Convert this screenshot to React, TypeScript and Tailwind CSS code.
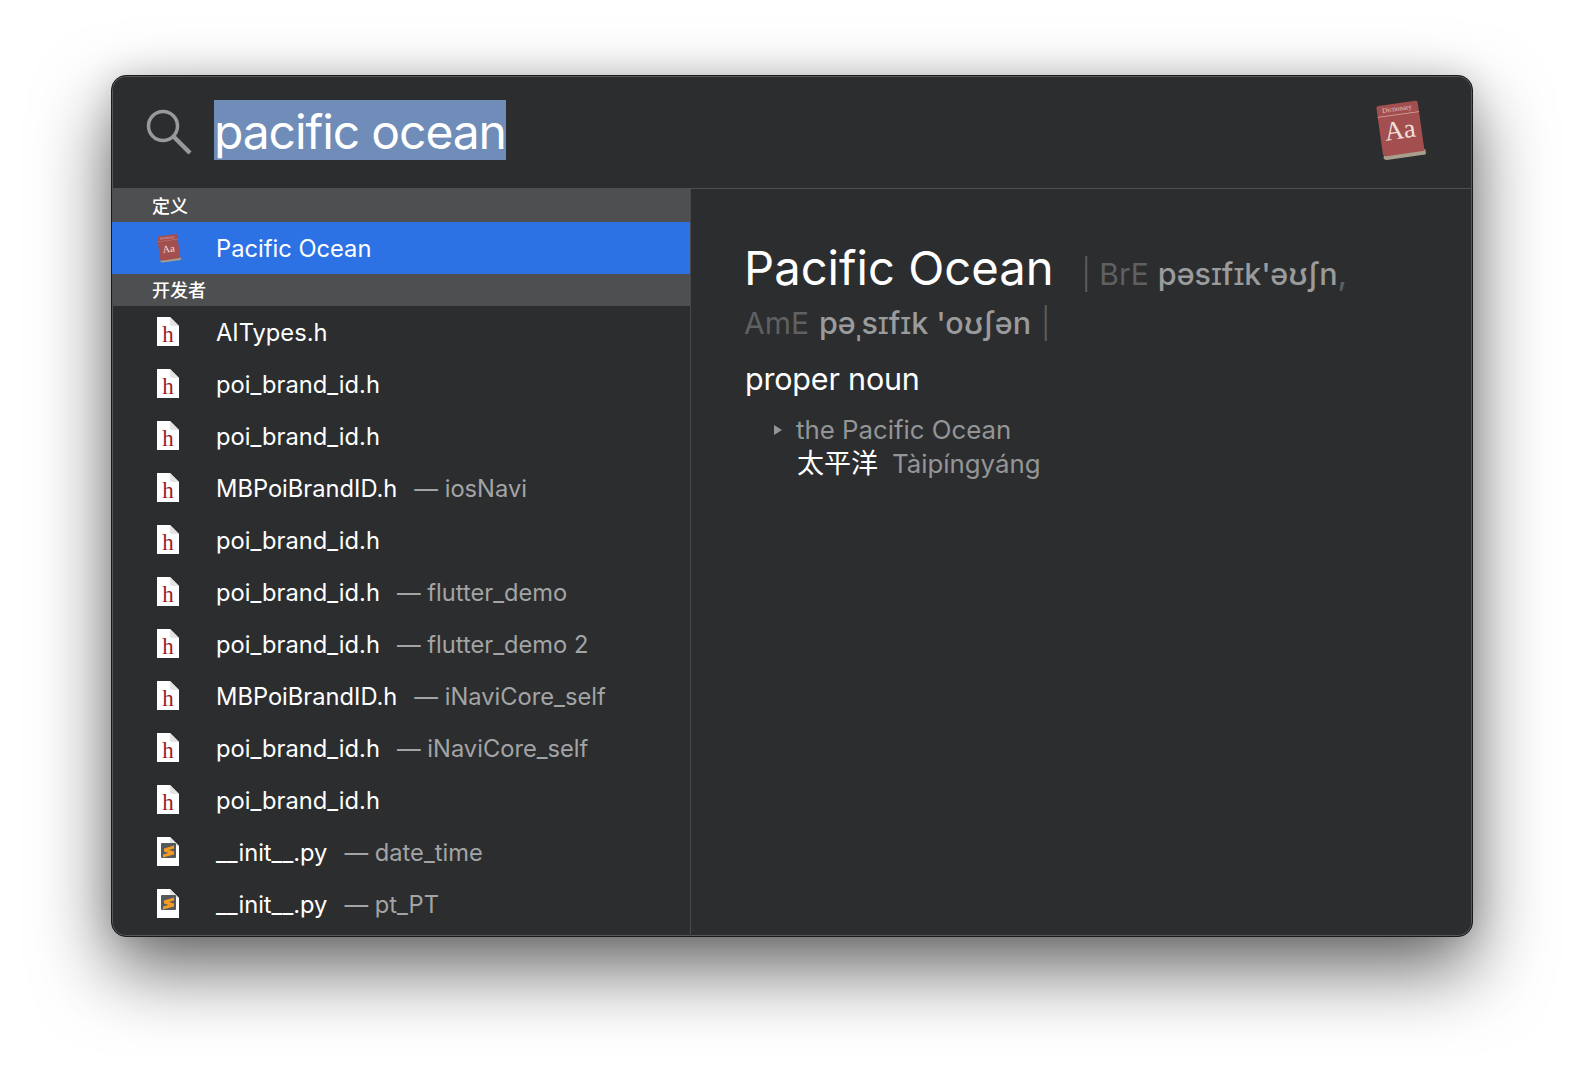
type Row = {
  name: string;
  sub?: string;
  icon: "h" | "s";
};

const rows: Row[] = [
  { name: "AITypes.h", icon: "h" },
  { name: "poi_brand_id.h", icon: "h" },
  { name: "poi_brand_id.h", icon: "h" },
  { name: "MBPoiBrandID.h", sub: "iosNavi", icon: "h" },
  { name: "poi_brand_id.h", icon: "h" },
  { name: "poi_brand_id.h", sub: "flutter_demo", icon: "h" },
  { name: "poi_brand_id.h", sub: "flutter_demo 2", icon: "h" },
  { name: "MBPoiBrandID.h", sub: "iNaviCore_self", icon: "h" },
  { name: "poi_brand_id.h", sub: "iNaviCore_self", icon: "h" },
  { name: "poi_brand_id.h", icon: "h" },
  { name: "__init__.py", sub: "date_time", icon: "s" },
  { name: "__init__.py", sub: "pt_PT", icon: "s" },
];

function BookIcon({ className, small }: { className: string; small?: boolean }) {
  return (
    <svg viewBox="0 0 48 58" className={className}>
      <g transform="rotate(-8 24 29)">
        <path d="M6 50 L45 50 L45 54 Q45 55 44 55 L8 55 Q6 55 5 53 Z" fill="#a89f8c" />
        <path d="M7 4 L42 4 Q44 4 44 6 L44 51.5 L8 51.5 Q5 51.5 5 49 L5 6 Q5 4 7 4 Z" fill="#a34f4f" />
        <rect x="5" y="14" width="39" height="0.8" fill="#d9aaa6" />
        <text x="24" y="11" textAnchor="middle" fontSize="6.5" fill="#e6cbc8" fontFamily="'Liberation Serif', serif">
          Dictionary
        </text>
        <text x="24" y="37" textAnchor="middle" fontSize={small ? 20 : 25} fill="#efe0dd" fontFamily="'Liberation Serif', serif">
          Aa
        </text>
      </g>
    </svg>
  );
}

function FileIcon({ icon }: { icon: "h" | "s" }) {
  return (
    <svg viewBox="0 0 22 29" className="mb-[1px] h-[29px] w-[22px] shrink-0">
      <path d="M0 0 H13 L22 9 V29 H0 Z" fill="#ffffff" />
      <path d="M13 0 L22 9 H15 Q13 9 13 7 Z" fill="#e4e4e4" />
      {icon === "h" ? (
        <text x="11" y="25" textAnchor="middle" fontSize="23" fill="#9c1c2c" fontFamily="'Liberation Serif', serif">
          h
        </text>
      ) : (
        <>
          <rect x="4" y="6" width="15" height="15" rx="1" fill="#55585c" />
          <path d="M7 11.5 L17 8.5 V11.5 L12 13 L17 14.5 V17.5 L6 20.5 V17.5 L11.5 16 L7 14.5 Z" fill="#f29a26" />
        </>
      )}
    </svg>
  );
}

function SectionHeader({ title, tall }: { title: string; tall?: boolean }) {
  return (
    <div className={`flex items-center bg-[#4e4f51] pl-[40px] text-[18px] font-medium text-white ${tall ? "h-[33px] pt-[3px]" : "h-[32px] pt-[2px]"}`}>
      {title}
    </div>
  );
}

function ResultRow({ row }: { row: Row }) {
  return (
    <div className="flex h-[52px] shrink-0 items-center pl-[45px]">
      <FileIcon icon={row.icon} />
      <span className="mt-[2px] ml-[37px] text-white">{row.name}</span>
      {row.sub && <span className="mt-[2px] ml-[17px] text-[#a3a4a5]">— {row.sub}</span>}
    </div>
  );
}

export default function App() {
  return (
    <div className="h-[1084px] overflow-hidden bg-white pt-[75px] pl-[111px] font-['Inter','Noto_Sans_CJK_SC',sans-serif]">
      <div className="flex h-[862px] w-[1362px] flex-col overflow-hidden rounded-[15px] border border-[#1a1a1b] bg-[#2c2d2f] shadow-[0_32px_76px_rgba(0,0,0,0.6),0_0_30px_rgba(0,0,0,0.12),inset_0_0_0_1px_#57585a]">
        <div className="flex h-[113px] shrink-0 items-center border-b border-[#4e4f51] pr-[46px] pl-[34px]">
          <svg viewBox="0 0 46 46" className="h-[46px] w-[46px] shrink-0" fill="none" stroke="#98999a">
            <circle cx="17" cy="17" r="14.5" strokeWidth="3.5" />
            <path d="M27.5 27.5 L44 44" strokeWidth="4.5" />
          </svg>
          <span className="mb-[5px] ml-[22px] bg-[#6f8db8] pt-[4px] text-[48px] leading-[56px] tracking-[-1.1px] text-white">
            pacific ocean
          </span>
          <BookIcon className="mb-[5px] ml-auto h-[62px] w-[52px]" />
        </div>

        <div className="flex min-h-0 flex-1">
          <div className="flex w-[579px] shrink-0 flex-col overflow-hidden border-r border-[#48494b] text-[23.7px] leading-[30px]">
            <SectionHeader title="定义" tall />
            <div className="flex h-[52px] shrink-0 items-center bg-[#2d72e4] pl-[43px] text-white">
              <BookIcon small className="h-[30px] w-[27px] shrink-0" />
              <span className="mt-[2px] ml-[34px]">Pacific Ocean</span>
            </div>
            <SectionHeader title="开发者" />
            {rows.map((row, i) => (
              <ResultRow key={i} row={row} />
            ))}
          </div>

          <div className="min-w-0 flex-1 pt-[49px] pl-[53px]">
            <div className="flex items-baseline whitespace-nowrap">
              <span className="text-[47.2px] leading-[60px] text-white">Pacific Ocean</span>
              <span className="ml-[28px] text-[30px] text-[#5f6061]"><span className="font-light">|</span> BrE</span>
              <span className="ml-[9px] text-[30.5px] font-medium text-[#9a9b9c]">pəsɪfɪk'əʊʃn<span className="text-[#5f6061]">,</span></span>
            </div>
            <div className="mt-[-3px] flex items-baseline whitespace-nowrap text-[30px] leading-[56px]">
              <span className="text-[#5f6061]">AmE</span>
              <span className="ml-[10px] text-[30.5px] font-medium text-[#9a9b9c]">pəˌsɪfɪk 'oʊʃən</span>
              <span className="ml-[10px] font-light text-[#5f6061]">|</span>
            </div>
            <div className="ml-[1px] text-[30.5px] leading-[56px] tracking-[-0.2px] text-white">proper noun</div>
            <div className="mt-[6px] ml-[30px] flex items-center text-[25.8px] leading-[34px] text-[#949596]">
              <span className="h-0 w-0 border-y-[5px] border-l-[8px] border-y-transparent border-l-[#949596]" />
              <span className="ml-[14px]">the Pacific Ocean</span>
            </div>
            <div className="ml-[53px] flex items-baseline text-[25.8px] leading-[34px]">
              <span className="text-[27px] text-white">太平洋</span>
              <span className="ml-[14px] text-[#949596]">Tàipíngyáng</span>
            </div>
          </div>
        </div>
      </div>
    </div>
  );
}
